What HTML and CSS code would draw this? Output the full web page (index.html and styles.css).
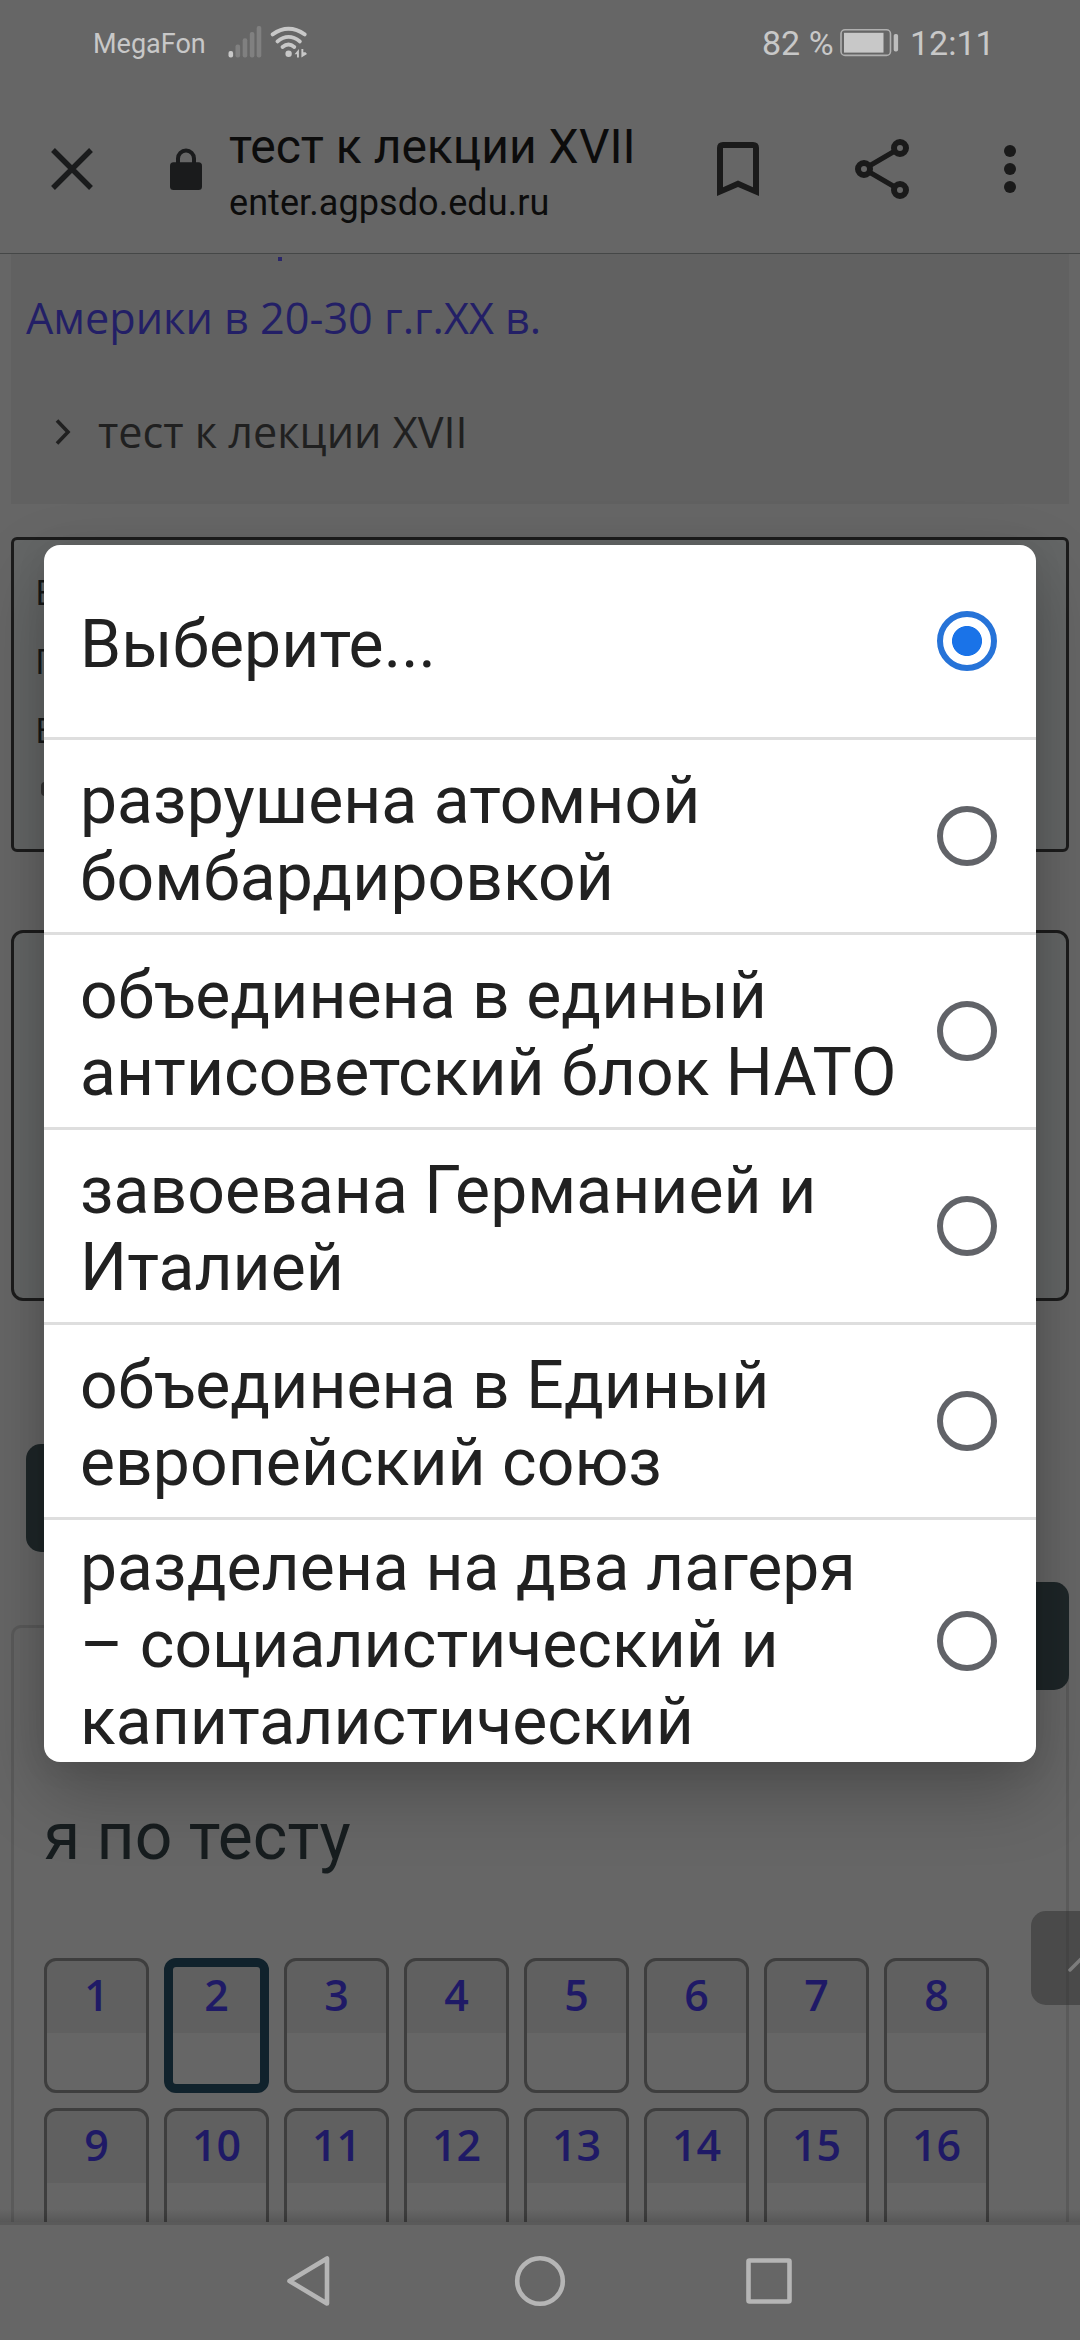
FILE: index.html
```html
<!DOCTYPE html>
<html lang="ru">
<head>
<meta charset="utf-8">
<title>тест к лекции XVII</title>
<link rel="stylesheet" href="styles.css">
</head>
<body>
<div class="screen">
  <header class="status">
    <span class="carrier">MegaFon</span>
    <svg class="signal" width="80" height="36" viewBox="0 0 80 36">
      <rect x="0.5" y="26" width="4.6" height="6.4" rx="2" fill="#c8c8c8"/>
      <g fill="#808080">
        <rect x="7.5" y="19.6" width="4.6" height="12.8" rx="2"/>
        <rect x="14.7" y="13.3" width="4.6" height="19.1" rx="2"/>
        <rect x="21.8" y="7" width="4.6" height="25.4" rx="2"/>
        <rect x="28.7" y="1" width="4.6" height="31.4" rx="2"/>
      </g>
      <g fill="none" stroke="#c8c8c8" stroke-width="3.8" stroke-linecap="round">
        <path d="M44.600 9.400Q60.500 -1.800 76.700 9.400"/>
        <path d="M49.400 16.400Q60.500 7.400 71.900 16.400"/>
        <path d="M54.500 22Q60.500 17 66.300 22"/>
      </g>
      <circle cx="60.600" cy="28.700" r="3.200" fill="#c8c8c8"/>
      <path d="M66.600 29.300L70.900 24V32.400H69V29.300ZM73.400 24V32.400L79 29L77.500 27.200H75.300V24Z" fill="#c8c8c8"/>
    </svg>
    <span class="level">82 %</span>
    <svg class="battery" width="60" height="30" viewBox="0 0 60 30">
      <rect x="1" y="1.800" width="49.500" height="25.600" rx="4" fill="none" stroke="#b0b0b0" stroke-width="1.600"/>
      <rect x="4" y="4.800" width="39.500" height="19.800" fill="#c8c8c8"/>
      <rect x="53.700" y="6" width="4.400" height="17.500" rx="1.800" fill="#bdbdbd"/>
    </svg>
    <span class="clock">12:11</span>
  </header>

  <div class="toolbar">
    <svg class="close" width="44" height="44" viewBox="0 0 44 44"><path d="M3 3L41 41M41 3L3 41" stroke="#1a1b1c" stroke-width="5.400"/></svg>
    <svg class="lock" width="34" height="44" viewBox="0 0 34 44">
      <path d="M9 17V11.500a8 8 0 0 1 16 0V17" fill="none" stroke="#1a1b1c" stroke-width="4"/>
      <rect x="1" y="15.300" width="32" height="27.700" rx="3.500" fill="#1a1b1c"/>
    </svg>
    <div class="titles">
      <div class="title">тест к лекции XVII</div>
      <div class="url">enter.agpsdo.edu.ru</div>
    </div>
    <svg class="bookmark" width="42" height="54" viewBox="0 0 42 54"><path d="M6 0H36Q42 0 42 6V54L21 45L0 54V6Q0 0 6 0ZM6 6V45.200L21 38.500L36 45.200V6Z" fill="#1a1a1a" fill-rule="evenodd"/></svg>
    <svg class="share" width="54" height="60" viewBox="0 0 54 60">
      <path d="M45 9L9 30L45 51" fill="none" stroke="#1a1a1a" stroke-width="5"/>
      <g fill="#666" stroke="#1a1a1a" stroke-width="6"><circle cx="45" cy="9" r="6"/><circle cx="9" cy="30" r="6"/><circle cx="45" cy="51" r="6"/></g>
    </svg>
    <svg class="more" width="12" height="48" viewBox="0 0 12 48"><g fill="#1a1a1a"><circle cx="6" cy="6" r="6"/><circle cx="6" cy="24" r="6"/><circle cx="6" cy="42" r="6"/></g></svg>
  </div>

  <main class="page">
    <nav class="crumbs">
      <div class="crumb tail"></div>
      <div class="crumb link">Америки в 20-30 г.г.XX в.</div>
      <div class="crumb current">
        <svg width="16" height="26" viewBox="0 0 16 26"><path d="M2 1.500L13 13L2 24.500" fill="none" stroke="#202020" stroke-width="3.600"/></svg>
        <span>тест к лекции XVII</span>
      </div>
    </nav>
    <section class="info"><div>В</div><div>П</div><div>Б</div><i class="flag"></i></section>
    <section class="question"></section>
    <div class="buttons"><span class="btn left"></span><span class="btn right"></span></div>
    <section class="quiznav">
      <h2>я по тесту</h2>
      <div class="cells">
        <div class="cell"><b>1</b></div><div class="cell active"><b>2</b></div><div class="cell"><b>3</b></div><div class="cell"><b>4</b></div>
        <div class="cell"><b>5</b></div><div class="cell"><b>6</b></div><div class="cell"><b>7</b></div><div class="cell"><b>8</b></div>
        <div class="cell"><b>9</b></div><div class="cell"><b>10</b></div><div class="cell"><b>11</b></div><div class="cell"><b>12</b></div>
        <div class="cell"><b>13</b></div><div class="cell"><b>14</b></div><div class="cell"><b>15</b></div><div class="cell"><b>16</b></div>
      </div>
    </section>
    <div class="totop"><svg width="49" height="94" viewBox="0 0 49 94"><path d="M39 59L58 40" stroke="#7c7c7c" stroke-width="3.500" stroke-linecap="round"/></svg></div>
  </main>

  <footer class="sysnav">
    <svg width="506" height="54" viewBox="0 0 506 54">
      <g fill="none" stroke="#b5b5b5" stroke-width="4.600" stroke-linejoin="round">
        <path d="M41 4.500V49.500L3.500 27Z"/>
        <circle cx="254" cy="27" r="22.800"/>
        <rect x="462.500" y="6.500" width="41" height="41" rx="1"/>
      </g>
    </svg>
  </footer>

  <div class="dialog">
    <div class="option"><span>Выберите...</span><i class="radio on"></i></div>
    <div class="option"><span>разрушена атомной бомбардировкой</span><i class="radio"></i></div>
    <div class="option"><span>объединена в единый антисоветский блок НАТО</span><i class="radio"></i></div>
    <div class="option"><span>завоевана Германией и Италией</span><i class="radio"></i></div>
    <div class="option"><span>объединена в Единый европейский союз</span><i class="radio"></i></div>
    <div class="option"><span>разделена на два лагеря – социалистический и капиталистический</span><i class="radio"></i></div>
  </div>
</div>
</body>
</html>
```
FILE: styles.css
```css
* { box-sizing: border-box; }
body { margin: 0; background: #666; font-family: Roboto, sans-serif; }
svg { display: block; flex: none; }

.screen {
  position: relative;
  width: 1080px;
  height: 2340px;
  overflow: hidden;
  display: flex;
  flex-direction: column;
  background: #666;
}

/* status bar */
.status {
  height: 86px;
  padding-left: 93px;
  display: flex;
  align-items: center;
  color: #c8c8c8;
  white-space: nowrap;
}
.carrier { width: 135px; font-size: 27px; padding-top: 2px; }
.level { margin-left: 454px; width: 78px; font-size: 34px; }
.battery { margin-right: 10px; }
.clock { font-size: 34px; }

/* browser toolbar */
.toolbar {
  height: 168px;
  border-bottom: 1px solid #454747;
  display: flex;
  align-items: center;
  padding: 0 0 2px 50px;
}
.lock { margin-left: 75px; }
.titles { margin: 12px 0 0 26px; width: 488px; white-space: nowrap; color: #0c0c0c; }
.title { font-size: 48px; line-height: 56px; }
.url { font-size: 36px; line-height: 56px; letter-spacing: .07px; }
.share { margin-left: 96px; }
.more { margin-left: 95px; }

/* web page */
.page {
  position: relative;
  flex: none;
  height: 1968px;
  overflow: hidden;
  padding: 0 11px;
  font-family: "Open Sans", "Noto Sans", sans-serif;
}
.page::after {
  content: "";
  position: absolute;
  inset: auto 0 0;
  height: 13px;
  background: linear-gradient(transparent, rgba(0, 0, 0, .14));
}
.crumbs { height: 250px; background: #616161; font-size: 43.2px; overflow: hidden; }
.crumb { line-height: 60px; white-space: nowrap; }
.tail { width: 4px; height: 4px; margin: 3px 0 27px 267px; background: #2a266a; }
.link { color: #231f66; padding-left: 15px; }
.current { display: flex; align-items: center; gap: 27px; margin-top: 54px; padding-left: 44px; color: #202020; }
.info {
  height: 315px;
  margin-top: 33px;
  padding: 28px 0 0 21px;
  border: 3px solid #1c1c1c;
  border-radius: 6px;
  background: #646666;
  font-size: 35px;
  line-height: 48px;
  color: #161818;
}
.info div + div { margin-top: 21px; }
.flag { display: block; margin: 28px 0 0 6px; width: 8px; height: 14px; border-left: 3px solid #333; border-radius: 5px; }
.question {
  height: 371px;
  margin-top: 78px;
  border: 3px solid #1c1c1c;
  border-radius: 12px;
  background: #646666;
}
.buttons { height: 246px; margin: 143px 0 -65px; padding-left: 15px; display: flex; justify-content: space-between; position: relative; }
.btn { width: 140px; height: 108px; border-radius: 15px; background: #1e2628; }
.btn.right { align-self: flex-end; }
.quiznav { height: 700px; border: 3px solid #5a5a5a; border-radius: 10px; padding: 170px 30px 0; }
.quiznav h2 { margin: 0; font: 400 66px/78px Roboto, sans-serif; color: #171d1f; }
.cells { display: grid; grid-template-columns: repeat(8, 105px); gap: 15px; margin-top: 82px; }
.cell {
  height: 135px;
  border: 3px solid #3e3e3e;
  border-radius: 12px;
  background: linear-gradient(#606060 72px, #666 72px);
  text-align: center;
}
.cell b { display: block; font-size: 43px; font-weight: 600; line-height: 68px; color: #1f1a66; }
.active { border: 9px solid #10222c; background: linear-gradient(#606060 66px, #666 66px); }
.active b { margin-top: -6px; }
.totop {
  position: absolute;
  left: 1031px;
  top: 1657px;
  width: 80px;
  height: 94px;
  border-radius: 15px;
  background: rgba(46, 46, 46, .5);
}

/* system navigation */
.sysnav { flex: 1; border-top: 3px solid #5a5a5a; padding: 29px 0 0 286px; }

/* select popup */
.dialog {
  position: absolute;
  left: 44px;
  top: 545px;
  width: 992px;
  height: 1217px;
  border-radius: 16px;
  background: #fff;
  overflow: hidden;
  box-shadow: 0 30px 70px rgba(0, 0, 0, .25), 0 4px 30px rgba(0, 0, 0, .08);
}
.option {
  position: relative;
  height: 195px;
  border-bottom: 3px solid #dedede;
  padding: 6px 100px 0 36px;
  display: flex;
  align-items: center;
  font-size: 66px;
  line-height: 77px;
  letter-spacing: .06px;
  color: #212121;
}
.option:last-child { height: 242px; border: 0; padding-top: 7px; }
.option span { width: 822px; }
.radio {
  position: absolute;
  right: 39px;
  top: 50%;
  width: 60px;
  height: 60px;
  margin-top: -30px;
  border: 6px solid #616368;
  border-radius: 50%;
}
.on { border-color: #2673d8; background: radial-gradient(circle, #1a73e8 14.600px, #fff 15.400px); }
```
